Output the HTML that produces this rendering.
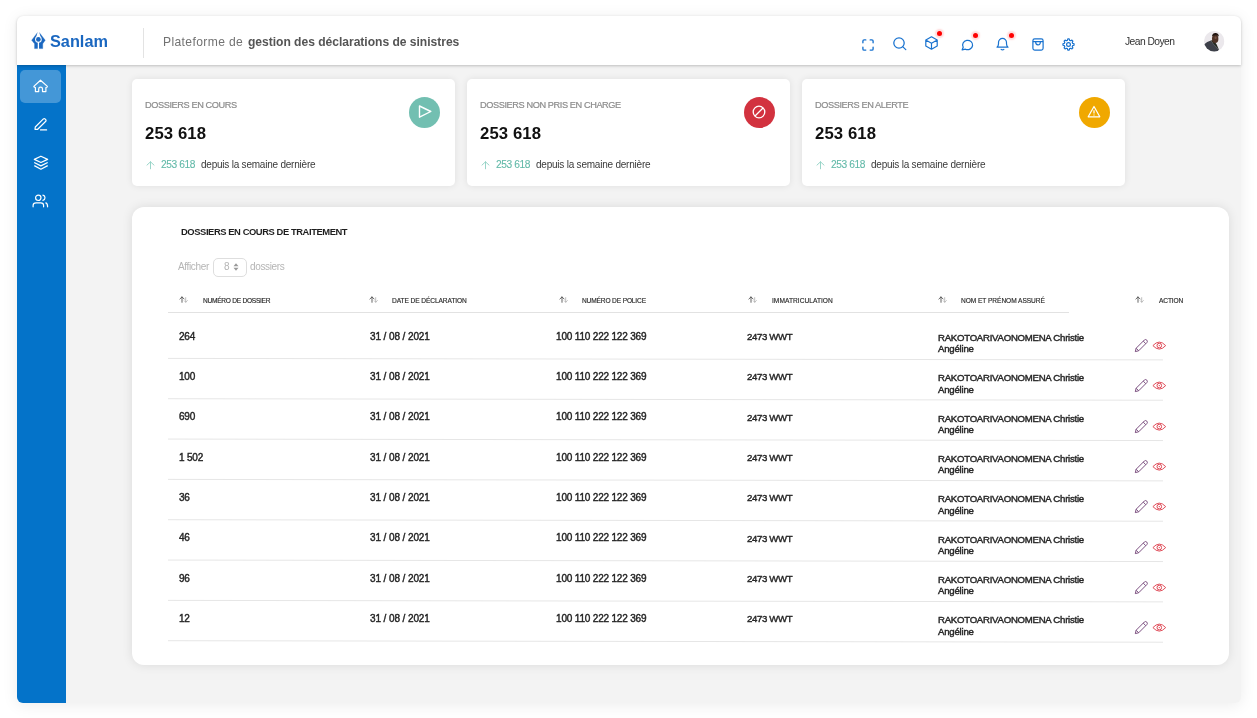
<!DOCTYPE html>
<html><head><meta charset="utf-8">
<style>
*{box-sizing:border-box;margin:0;padding:0}
html,body{width:1257px;height:718px;overflow:hidden;background:#fff;font-family:"Liberation Sans",sans-serif;color:#222}
.t{will-change:transform}
.t{position:absolute;white-space:nowrap}
.abs{position:absolute}
.app{position:absolute;left:17px;top:16px;width:1224px;height:686.5px;background:#f3f3f3;border-radius:6px;box-shadow:0 2px 16px rgba(0,0,0,0.08)}
.hdr{position:absolute;left:17px;top:16px;width:1224px;height:49px;background:#fff;border-radius:6px 6px 0 0;box-shadow:0 1px 3px rgba(0,0,0,0.22)}
.side{position:absolute;left:17px;top:65px;width:49px;height:637.5px;background:#0473c9;border-radius:0 0 0 6px}
.card{position:absolute;background:#fff;border-radius:5px;box-shadow:0 0 7px rgba(0,0,0,0.085)}
.tbl{position:absolute;left:132px;top:206.8px;width:1097px;height:458px;background:#fff;border-radius:12px;box-shadow:0 0 11px rgba(0,0,0,0.1)}
.ln{position:absolute;height:1px;background:#ececec}
svg{position:absolute;overflow:visible}
</style></head>
<body>
<div class="app"></div>
<div class="side"></div>
<div class="hdr"></div>

<svg style="left:28px;top:29px" width="22" height="22" viewBox="0 0 22 22">
<path d="M9.4 3.7 L11.4 3.7 L17.2 11.2 L14.7 14.8 L14.7 19.6 L6.6 19.6 L6.6 14.8 L3.7 11.2 Z" fill="#1a67c0" stroke="#1a67c0" stroke-width="0.4" stroke-linejoin="round"/>
<path d="M9.6 3 L11.2 3 L12.6 8 L8.2 8 Z" fill="#fff"/>
<rect x="9.75" y="12" width="1.3" height="8" fill="#fff"/>
<circle cx="10.4" cy="10.4" r="3.3" fill="#fff"/>
<circle cx="10.4" cy="10.4" r="2.35" fill="#1a67c0"/>
</svg>
<div class="t" style="left:49.60px;top:33.00px;font-size:16.3px;line-height:16.3px;color:#1a67c0;font-weight:bold;letter-spacing:0px;">Sanlam</div>
<div class="abs" style="left:143px;top:28px;width:1px;height:30px;background:#e3e3e3"></div>
<div class="t" style="left:163.40px;top:36.36px;font-size:12.1px;line-height:12.1px;color:#727272;font-weight:normal;letter-spacing:0.38px;">Plateforme de</div>
<div class="t" style="left:247.80px;top:36.36px;font-size:12.1px;line-height:12.1px;color:#555;font-weight:bold;letter-spacing:-0.03px;">gestion des déclarations de sinistres</div>
<div class="t" style="left:1125.00px;top:36.68px;font-size:10.3px;line-height:10.3px;color:#333;font-weight:normal;letter-spacing:-0.55px;">Jean Doyen</div>
<svg style="left:862.3px;top:38.5px" width="13" height="13" viewBox="0 0 13 13" fill="none" stroke="#1872cf" stroke-width="1.35" stroke-linecap="round">
<path d="M0.9 3.8 V2.1 Q0.9 0.9 2.1 0.9 H3.8 M8.2 0.9 H9.9 Q11.1 0.9 11.1 2.1 V3.8 M11.1 8.2 V9.9 Q11.1 11.1 9.9 11.1 H8.2 M3.8 11.1 H2.1 Q0.9 11.1 0.9 9.9 V8.2"/></svg>
<svg style="left:893px;top:37px" width="14" height="14" viewBox="0 0 14 14" fill="none" stroke="#1872cf" stroke-width="1.25" stroke-linecap="round">
<circle cx="6" cy="6" r="5.2"/><path d="M9.9 9.9 L12.8 12.6"/></svg>
<svg style="left:925px;top:36px" width="14" height="14" viewBox="0 0 14 14" fill="none" stroke="#1872cf" stroke-width="1.2" stroke-linejoin="round">
<path d="M6.5 0.8 L12.2 4 V10 L6.5 13.2 L0.8 10 V4 Z M0.8 4 L6.5 7.2 L12.2 4 M6.5 7.2 V13.2"/></svg>
<svg style="left:960.5px;top:39px" width="13" height="12" viewBox="0 0 13 12" fill="none" stroke="#1872cf" stroke-width="1.25" stroke-linejoin="round">
<path d="M1.2 10.8 L2.2 8.2 A5 4.7 0 1 1 4.4 10.2 Z"/></svg>
<svg style="left:996.3px;top:37px" width="13" height="14" viewBox="0 0 13 14" fill="none" stroke="#1872cf" stroke-width="1.2" stroke-linejoin="round" stroke-linecap="round">
<path d="M1 10.2 H12 Q10.5 9 10.5 6.8 V5.4 A4 4 0 0 0 2.5 5.4 V6.8 Q2.5 9 1 10.2 Z M5.2 12.4 Q6.5 13.2 7.8 12.4"/></svg>
<svg style="left:1032px;top:38px" width="12" height="13" viewBox="0 0 12 13" fill="none" stroke="#1872cf" stroke-width="1.2" stroke-linejoin="round">
<rect x="0.9" y="0.9" width="10.2" height="11.2" rx="1.8"/><path d="M0.9 3.6 H11.1 M3.6 3.8 Q3.6 6.8 6 6.8 Q8.4 6.8 8.4 3.8"/></svg>
<svg style="left:1061.8px;top:37.9px" width="13" height="13" viewBox="0 0 13 13" fill="none" stroke="#1872cf" stroke-width="1.2" stroke-linejoin="round">
<path d="M12.06 5.80 L12.06 7.20 L10.65 7.63 L10.24 8.63 L10.92 9.93 L9.93 10.92 L8.63 10.24 L7.63 10.65 L7.20 12.06 L5.80 12.06 L5.37 10.65 L4.37 10.24 L3.07 10.92 L2.08 9.93 L2.76 8.63 L2.35 7.63 L0.94 7.20 L0.94 5.80 L2.35 5.37 L2.76 4.37 L2.08 3.07 L3.07 2.08 L4.37 2.76 L5.37 2.35 L5.80 0.94 L7.20 0.94 L7.63 2.35 L8.63 2.76 L9.93 2.08 L10.92 3.07 L10.24 4.37 L10.65 5.37 Z"/><circle cx="6.5" cy="6.5" r="1.9"/></svg>
<div class="abs" style="left:936.8px;top:30.5px;width:5px;height:5px;border-radius:50%;background:#ff0000;box-shadow:0 0 1.5px 2px rgba(255,70,70,0.2)"></div>
<div class="abs" style="left:972.8px;top:32.5px;width:5px;height:5px;border-radius:50%;background:#ff0000;box-shadow:0 0 1.5px 2px rgba(255,70,70,0.2)"></div>
<div class="abs" style="left:1008.7px;top:32.5px;width:5px;height:5px;border-radius:50%;background:#ff0000;box-shadow:0 0 1.5px 2px rgba(255,70,70,0.2)"></div>
<svg style="left:1203.6px;top:30.5px" width="20.4" height="20.4" viewBox="0 0 20.4 20.4">
<defs><clipPath id="av"><circle cx="10.2" cy="10.2" r="10.2"/></clipPath></defs>
<g clip-path="url(#av)">
<rect width="20.4" height="20.4" fill="#ebe8ec"/>
<path d="M0 13.6 Q3 10.6 6.9 9.6 L9.2 12.8 L15 18.8 L13.2 21 L0 21 Z" fill="#3d4049"/>
<path d="M6.9 9.6 L9.7 9 L12.8 13.8 L15 18.8 L9.2 12.8 Z" fill="#20261f"/>
<ellipse cx="11.2" cy="7.8" rx="3.2" ry="4.3" fill="#4e3226"/>
<path d="M8 5.2 Q8.6 1.8 11.5 1.9 Q14.8 2 14.8 5.4 Q12.6 3.8 10.1 4.4 Z" fill="#21150f"/>
<ellipse cx="11.6" cy="6.8" rx="1.1" ry="1.3" fill="#a27a6a" opacity="0.45"/>
</g></svg>
<div class="abs" style="left:20px;top:69.7px;width:41px;height:33px;border-radius:5px;background:rgba(255,255,255,0.26)"></div>
<svg style="left:33px;top:79px" width="16" height="14" viewBox="0 0 16 14" fill="none" stroke="#fff" stroke-width="1.2" stroke-linejoin="round">
<path d="M7.5 1.2 L14.1 7.1 Q14.7 7.8 13.9 8.2 L12.9 8.5 V12.6 H9.5 V9.9 Q9.5 8.1 7.6 8.1 Q5.7 8.1 5.7 9.9 V12.6 H2.4 V8.5 L1.3 8.2 Q0.5 7.8 1.1 7.1 Z"/></svg>
<svg style="left:33.8px;top:117.6px" width="13" height="13" viewBox="0 0 13 13" fill="none" stroke="#fff" stroke-width="1.2" stroke-linejoin="round" stroke-linecap="round">
<path d="M1 11.3 L1.3 9 L9.4 0.9 Q10.2 0.3 11 0.9 L11.8 1.7 Q12.4 2.5 11.8 3.3 L3.7 11.3 Z M6.5 11.9 H12.6"/></svg>
<svg style="left:33px;top:155px" width="16" height="16" viewBox="0 0 16 16" fill="none" stroke="#fff" stroke-width="1.2" stroke-linejoin="round">
<path d="M7.9 1.2 L14.6 4.4 L7.9 7.5 L1.3 4.4 Z M1.2 7.5 L7.9 10.9 L14.7 7.5 M1.3 10.6 L7.9 14.2 L14.7 10.6"/></svg>
<svg style="left:32px;top:194px" width="17" height="14" viewBox="0 0 17 14" fill="none" stroke="#fff" stroke-width="1.2" stroke-linecap="round">
<circle cx="6.3" cy="3.8" r="2.7"/><path d="M1.1 12.8 V11.6 Q1.1 8.9 4 8.9 H8.7 Q11.6 8.9 11.6 11.6 V12.8 M10.9 1.2 Q13 1.6 13 3.8 Q13 6 10.9 6.4 M13.8 8.9 Q15.6 9.6 15.6 12.8"/></svg>
<div class="card" style="left:132px;top:79px;width:323px;height:107.2px"></div>
<div class="t" style="left:145.20px;top:101.11px;font-size:9.2px;line-height:9.2px;color:#8c8c8c;font-weight:normal;letter-spacing:-0.4px;-webkit-text-stroke:0.2px #8c8c8c">DOSSIERS EN COURS</div>
<div class="t" style="left:145.30px;top:125.76px;font-size:16.7px;line-height:16.7px;color:#111;font-weight:bold;letter-spacing:0.12px;">253 618</div>
<svg style="left:145.5px;top:161.3px" width="9" height="9" viewBox="0 0 9 9" fill="none" stroke="#8fd0c3" stroke-width="0.9" stroke-linecap="round">
<path d="M4.5 7.8 V0.8 M1 4.1 L4.5 0.8 L8 4.1"/></svg>
<div class="t" style="left:160.60px;top:159.77px;font-size:10.2px;line-height:10.2px;color:#62b9a8;font-weight:normal;letter-spacing:-0.42px;-webkit-text-stroke:0.1px #62b9a8">253 618</div>
<div class="t" style="left:201.20px;top:159.94px;font-size:10px;line-height:10px;color:#3a3a3a;font-weight:normal;letter-spacing:-0.22px;">depuis la semaine dernière</div>
<div class="abs" style="left:408.8px;top:96.9px;width:31px;height:31px;border-radius:50%;background:#72bfb1"></div>
<svg style="left:418.3px;top:105.4px" width="14" height="14" viewBox="0 0 14 14" fill="none" stroke="#fff" stroke-width="1.4" stroke-linejoin="round"><path d="M1.5 1 L12.8 6.5 L1.5 12.2 Z"/></svg>
<div class="card" style="left:467px;top:79px;width:323px;height:107.2px"></div>
<div class="t" style="left:480.20px;top:101.11px;font-size:9.2px;line-height:9.2px;color:#8c8c8c;font-weight:normal;letter-spacing:-0.4px;-webkit-text-stroke:0.2px #8c8c8c">DOSSIERS NON PRIS EN CHARGE</div>
<div class="t" style="left:480.30px;top:125.76px;font-size:16.7px;line-height:16.7px;color:#111;font-weight:bold;letter-spacing:0.12px;">253 618</div>
<svg style="left:480.5px;top:161.3px" width="9" height="9" viewBox="0 0 9 9" fill="none" stroke="#8fd0c3" stroke-width="0.9" stroke-linecap="round">
<path d="M4.5 7.8 V0.8 M1 4.1 L4.5 0.8 L8 4.1"/></svg>
<div class="t" style="left:495.60px;top:159.77px;font-size:10.2px;line-height:10.2px;color:#62b9a8;font-weight:normal;letter-spacing:-0.42px;-webkit-text-stroke:0.1px #62b9a8">253 618</div>
<div class="t" style="left:536.20px;top:159.94px;font-size:10px;line-height:10px;color:#3a3a3a;font-weight:normal;letter-spacing:-0.22px;">depuis la semaine dernière</div>
<div class="abs" style="left:743.8px;top:96.9px;width:31px;height:31px;border-radius:50%;background:#d2323f"></div>
<svg style="left:752.3px;top:105.4px" width="14" height="14" viewBox="0 0 14 14" fill="none" stroke="#fff" stroke-width="1.3"><circle cx="7" cy="7" r="5.8"/><path d="M3 11 L11 3"/></svg>
<div class="card" style="left:802px;top:79px;width:323px;height:107.2px"></div>
<div class="t" style="left:815.20px;top:101.11px;font-size:9.2px;line-height:9.2px;color:#8c8c8c;font-weight:normal;letter-spacing:-0.4px;-webkit-text-stroke:0.2px #8c8c8c">DOSSIERS EN ALERTE</div>
<div class="t" style="left:815.30px;top:125.76px;font-size:16.7px;line-height:16.7px;color:#111;font-weight:bold;letter-spacing:0.12px;">253 618</div>
<svg style="left:815.5px;top:161.3px" width="9" height="9" viewBox="0 0 9 9" fill="none" stroke="#8fd0c3" stroke-width="0.9" stroke-linecap="round">
<path d="M4.5 7.8 V0.8 M1 4.1 L4.5 0.8 L8 4.1"/></svg>
<div class="t" style="left:830.60px;top:159.77px;font-size:10.2px;line-height:10.2px;color:#62b9a8;font-weight:normal;letter-spacing:-0.42px;-webkit-text-stroke:0.1px #62b9a8">253 618</div>
<div class="t" style="left:871.20px;top:159.94px;font-size:10px;line-height:10px;color:#3a3a3a;font-weight:normal;letter-spacing:-0.22px;">depuis la semaine dernière</div>
<div class="abs" style="left:1078.8px;top:96.9px;width:31px;height:31px;border-radius:50%;background:#f0a800"></div>
<svg style="left:1087.3px;top:105.4px" width="14" height="14" viewBox="0 0 14 14" fill="none" stroke="#fff" stroke-width="1.2" stroke-linejoin="round"><path d="M7 1.5 L12.8 11.8 H1.2 Z M7 5.2 V8.4 M7 9.6 V10.4"/></svg>
<div class="tbl"></div>
<div class="t" style="left:180.60px;top:227.34px;font-size:9.4px;line-height:9.4px;color:#1e1e1e;font-weight:bold;letter-spacing:-0.42px;">DOSSIERS EN COURS DE TRAITEMENT</div>
<div class="t" style="left:178.00px;top:261.84px;font-size:10px;line-height:10px;color:#b5b5b5;font-weight:normal;letter-spacing:-0.35px;">Afficher</div>
<div class="abs" style="left:213px;top:258px;width:34px;height:19px;border:1px solid #dedede;border-radius:5px"></div>
<div class="t" style="left:223.50px;top:261.84px;font-size:10px;line-height:10px;color:#b5b5b5;font-weight:normal;letter-spacing:0px;">8</div>
<svg style="left:233px;top:263px" width="6" height="8" viewBox="0 0 6 8" fill="#9a9a9a"><path d="M3 0.3 L5.5 3.3 H0.5 Z M3 7.7 L0.5 4.7 H5.5 Z"/></svg>
<div class="t" style="left:250.00px;top:261.84px;font-size:10px;line-height:10px;color:#b5b5b5;font-weight:normal;letter-spacing:-0.35px;">dossiers</div>
<svg style="left:179.1px;top:295.5px" width="10" height="7" viewBox="0 0 10 7" fill="none" stroke-width="1.1" stroke-linecap="round">
<path d="M3 6.3 V0.9 M0.9 3 L3 0.9 L5.1 3" stroke="#4a4a4a" stroke-width="0.85"/><path d="M6.7 1.6 V6.2 M5.3 4.8 L6.7 6.2 L8.4 4.6" stroke="#a8a8a8" stroke-width="0.75"/></svg>
<div class="t" style="left:203.00px;top:297.51px;font-size:6.6px;line-height:6.6px;color:#2a2a2a;font-weight:normal;letter-spacing:-0.27px;-webkit-text-stroke:0.15px #2a2a2a">NUMÉRO DE DOSSIER</div>
<svg style="left:369.0px;top:295.5px" width="10" height="7" viewBox="0 0 10 7" fill="none" stroke-width="1.1" stroke-linecap="round">
<path d="M3 6.3 V0.9 M0.9 3 L3 0.9 L5.1 3" stroke="#4a4a4a" stroke-width="0.85"/><path d="M6.7 1.6 V6.2 M5.3 4.8 L6.7 6.2 L8.4 4.6" stroke="#a8a8a8" stroke-width="0.75"/></svg>
<div class="t" style="left:392.20px;top:297.51px;font-size:6.6px;line-height:6.6px;color:#2a2a2a;font-weight:normal;letter-spacing:-0.08px;-webkit-text-stroke:0.15px #2a2a2a">DATE DE DÉCLARATION</div>
<svg style="left:558.6px;top:295.5px" width="10" height="7" viewBox="0 0 10 7" fill="none" stroke-width="1.1" stroke-linecap="round">
<path d="M3 6.3 V0.9 M0.9 3 L3 0.9 L5.1 3" stroke="#4a4a4a" stroke-width="0.85"/><path d="M6.7 1.6 V6.2 M5.3 4.8 L6.7 6.2 L8.4 4.6" stroke="#a8a8a8" stroke-width="0.75"/></svg>
<div class="t" style="left:582.00px;top:297.51px;font-size:6.6px;line-height:6.6px;color:#2a2a2a;font-weight:normal;letter-spacing:-0.15px;-webkit-text-stroke:0.15px #2a2a2a">NUMÉRO DE POLICE</div>
<svg style="left:748.4px;top:295.5px" width="10" height="7" viewBox="0 0 10 7" fill="none" stroke-width="1.1" stroke-linecap="round">
<path d="M3 6.3 V0.9 M0.9 3 L3 0.9 L5.1 3" stroke="#4a4a4a" stroke-width="0.85"/><path d="M6.7 1.6 V6.2 M5.3 4.8 L6.7 6.2 L8.4 4.6" stroke="#a8a8a8" stroke-width="0.75"/></svg>
<div class="t" style="left:771.50px;top:297.51px;font-size:6.6px;line-height:6.6px;color:#2a2a2a;font-weight:normal;letter-spacing:0.04px;-webkit-text-stroke:0.15px #2a2a2a">IMMATRICULATION</div>
<svg style="left:937.6px;top:295.5px" width="10" height="7" viewBox="0 0 10 7" fill="none" stroke-width="1.1" stroke-linecap="round">
<path d="M3 6.3 V0.9 M0.9 3 L3 0.9 L5.1 3" stroke="#4a4a4a" stroke-width="0.85"/><path d="M6.7 1.6 V6.2 M5.3 4.8 L6.7 6.2 L8.4 4.6" stroke="#a8a8a8" stroke-width="0.75"/></svg>
<div class="t" style="left:961.00px;top:297.51px;font-size:6.6px;line-height:6.6px;color:#2a2a2a;font-weight:normal;letter-spacing:-0.05px;-webkit-text-stroke:0.15px #2a2a2a">NOM ET PRÉNOM ASSURÉ</div>
<svg style="left:1135.3px;top:295.5px" width="10" height="7" viewBox="0 0 10 7" fill="none" stroke-width="1.1" stroke-linecap="round">
<path d="M3 6.3 V0.9 M0.9 3 L3 0.9 L5.1 3" stroke="#4a4a4a" stroke-width="0.85"/><path d="M6.7 1.6 V6.2 M5.3 4.8 L6.7 6.2 L8.4 4.6" stroke="#a8a8a8" stroke-width="0.75"/></svg>
<div class="t" style="left:1158.60px;top:297.51px;font-size:6.6px;line-height:6.6px;color:#2a2a2a;font-weight:normal;letter-spacing:-0.12px;-webkit-text-stroke:0.15px #2a2a2a">ACTION</div>
<div class="ln" style="left:168px;top:312px;width:901px;background:#e2e2e2"></div>
<div class="t" style="left:179.30px;top:331.74px;font-size:10px;line-height:10px;color:#262626;font-weight:normal;letter-spacing:-0.2px;-webkit-text-stroke:0.42px #262626">264</div>
<div class="t" style="left:370.00px;top:331.74px;font-size:10px;line-height:10px;color:#262626;font-weight:normal;letter-spacing:-0.1px;-webkit-text-stroke:0.42px #262626">31 / 08 / 2021</div>
<div class="t" style="left:556.20px;top:331.74px;font-size:10px;line-height:10px;color:#262626;font-weight:normal;letter-spacing:-0.18px;-webkit-text-stroke:0.42px #262626">100 110 222 122 369</div>
<div class="t" style="left:746.70px;top:332.07px;font-size:9.6px;line-height:9.6px;color:#262626;font-weight:normal;letter-spacing:-0.35px;-webkit-text-stroke:0.42px #262626">2473 WWT</div>
<div class="t" style="left:938.40px;top:332.97px;font-size:9.6px;line-height:9.6px;color:#262626;font-weight:normal;letter-spacing:-0.25px;-webkit-text-stroke:0.42px #262626">RAKOTOARIVAONOMENA Christie</div>
<div class="t" style="left:938.40px;top:344.37px;font-size:9.6px;line-height:9.6px;color:#262626;font-weight:normal;letter-spacing:-0.2px;-webkit-text-stroke:0.42px #262626">Angéline</div>
<svg style="left:0;top:0" width="1257" height="718"><path d="M168 358.40 L1163 359.90" stroke="#e6e6e6" stroke-width="1"/></svg>
<svg style="left:1130px;top:334.00px" width="40" height="22" viewBox="0 0 40 22" fill="none" stroke-linejoin="round">
<path d="M5.3 17.6 L6.13 14.23 L14.33 6.03 A1.8 1.8 0 0 1 16.87 8.57 L8.67 16.77 Z M6.13 14.23 L8.67 16.77 M13.23 7.13 L15.77 9.67" stroke="#76487a" stroke-width="0.95"/>
<path d="M22.9 11.6 Q29.3 4.6 35.7 11.6 Q29.3 18.6 22.9 11.6 Z" stroke="#de4451" stroke-width="0.95"/>
<circle cx="29.3" cy="11.6" r="2.3" stroke="#de4451" stroke-width="1"/><circle cx="29.3" cy="11.6" r="0.7" fill="#de4451"/></svg>
<div class="t" style="left:179.30px;top:372.06px;font-size:10px;line-height:10px;color:#262626;font-weight:normal;letter-spacing:-0.2px;-webkit-text-stroke:0.42px #262626">100</div>
<div class="t" style="left:370.00px;top:372.06px;font-size:10px;line-height:10px;color:#262626;font-weight:normal;letter-spacing:-0.1px;-webkit-text-stroke:0.42px #262626">31 / 08 / 2021</div>
<div class="t" style="left:556.20px;top:372.06px;font-size:10px;line-height:10px;color:#262626;font-weight:normal;letter-spacing:-0.18px;-webkit-text-stroke:0.42px #262626">100 110 222 122 369</div>
<div class="t" style="left:746.70px;top:372.40px;font-size:9.6px;line-height:9.6px;color:#262626;font-weight:normal;letter-spacing:-0.35px;-webkit-text-stroke:0.42px #262626">2473 WWT</div>
<div class="t" style="left:938.40px;top:373.30px;font-size:9.6px;line-height:9.6px;color:#262626;font-weight:normal;letter-spacing:-0.25px;-webkit-text-stroke:0.42px #262626">RAKOTOARIVAONOMENA Christie</div>
<div class="t" style="left:938.40px;top:384.70px;font-size:9.6px;line-height:9.6px;color:#262626;font-weight:normal;letter-spacing:-0.2px;-webkit-text-stroke:0.42px #262626">Angéline</div>
<svg style="left:0;top:0" width="1257" height="718"><path d="M168 398.73 L1163 400.23" stroke="#e6e6e6" stroke-width="1"/></svg>
<svg style="left:1130px;top:374.33px" width="40" height="22" viewBox="0 0 40 22" fill="none" stroke-linejoin="round">
<path d="M5.3 17.6 L6.13 14.23 L14.33 6.03 A1.8 1.8 0 0 1 16.87 8.57 L8.67 16.77 Z M6.13 14.23 L8.67 16.77 M13.23 7.13 L15.77 9.67" stroke="#76487a" stroke-width="0.95"/>
<path d="M22.9 11.6 Q29.3 4.6 35.7 11.6 Q29.3 18.6 22.9 11.6 Z" stroke="#de4451" stroke-width="0.95"/>
<circle cx="29.3" cy="11.6" r="2.3" stroke="#de4451" stroke-width="1"/><circle cx="29.3" cy="11.6" r="0.7" fill="#de4451"/></svg>
<div class="t" style="left:179.30px;top:412.40px;font-size:10px;line-height:10px;color:#262626;font-weight:normal;letter-spacing:-0.2px;-webkit-text-stroke:0.42px #262626">690</div>
<div class="t" style="left:370.00px;top:412.40px;font-size:10px;line-height:10px;color:#262626;font-weight:normal;letter-spacing:-0.1px;-webkit-text-stroke:0.42px #262626">31 / 08 / 2021</div>
<div class="t" style="left:556.20px;top:412.40px;font-size:10px;line-height:10px;color:#262626;font-weight:normal;letter-spacing:-0.18px;-webkit-text-stroke:0.42px #262626">100 110 222 122 369</div>
<div class="t" style="left:746.70px;top:412.73px;font-size:9.6px;line-height:9.6px;color:#262626;font-weight:normal;letter-spacing:-0.35px;-webkit-text-stroke:0.42px #262626">2473 WWT</div>
<div class="t" style="left:938.40px;top:413.63px;font-size:9.6px;line-height:9.6px;color:#262626;font-weight:normal;letter-spacing:-0.25px;-webkit-text-stroke:0.42px #262626">RAKOTOARIVAONOMENA Christie</div>
<div class="t" style="left:938.40px;top:425.03px;font-size:9.6px;line-height:9.6px;color:#262626;font-weight:normal;letter-spacing:-0.2px;-webkit-text-stroke:0.42px #262626">Angéline</div>
<svg style="left:0;top:0" width="1257" height="718"><path d="M168 439.06 L1163 440.56" stroke="#e6e6e6" stroke-width="1"/></svg>
<svg style="left:1130px;top:414.66px" width="40" height="22" viewBox="0 0 40 22" fill="none" stroke-linejoin="round">
<path d="M5.3 17.6 L6.13 14.23 L14.33 6.03 A1.8 1.8 0 0 1 16.87 8.57 L8.67 16.77 Z M6.13 14.23 L8.67 16.77 M13.23 7.13 L15.77 9.67" stroke="#76487a" stroke-width="0.95"/>
<path d="M22.9 11.6 Q29.3 4.6 35.7 11.6 Q29.3 18.6 22.9 11.6 Z" stroke="#de4451" stroke-width="0.95"/>
<circle cx="29.3" cy="11.6" r="2.3" stroke="#de4451" stroke-width="1"/><circle cx="29.3" cy="11.6" r="0.7" fill="#de4451"/></svg>
<div class="t" style="left:179.30px;top:452.73px;font-size:10px;line-height:10px;color:#262626;font-weight:normal;letter-spacing:-0.2px;-webkit-text-stroke:0.42px #262626">1 502</div>
<div class="t" style="left:370.00px;top:452.73px;font-size:10px;line-height:10px;color:#262626;font-weight:normal;letter-spacing:-0.1px;-webkit-text-stroke:0.42px #262626">31 / 08 / 2021</div>
<div class="t" style="left:556.20px;top:452.73px;font-size:10px;line-height:10px;color:#262626;font-weight:normal;letter-spacing:-0.18px;-webkit-text-stroke:0.42px #262626">100 110 222 122 369</div>
<div class="t" style="left:746.70px;top:453.06px;font-size:9.6px;line-height:9.6px;color:#262626;font-weight:normal;letter-spacing:-0.35px;-webkit-text-stroke:0.42px #262626">2473 WWT</div>
<div class="t" style="left:938.40px;top:453.96px;font-size:9.6px;line-height:9.6px;color:#262626;font-weight:normal;letter-spacing:-0.25px;-webkit-text-stroke:0.42px #262626">RAKOTOARIVAONOMENA Christie</div>
<div class="t" style="left:938.40px;top:465.36px;font-size:9.6px;line-height:9.6px;color:#262626;font-weight:normal;letter-spacing:-0.2px;-webkit-text-stroke:0.42px #262626">Angéline</div>
<svg style="left:0;top:0" width="1257" height="718"><path d="M168 479.39 L1163 480.89" stroke="#e6e6e6" stroke-width="1"/></svg>
<svg style="left:1130px;top:454.99px" width="40" height="22" viewBox="0 0 40 22" fill="none" stroke-linejoin="round">
<path d="M5.3 17.6 L6.13 14.23 L14.33 6.03 A1.8 1.8 0 0 1 16.87 8.57 L8.67 16.77 Z M6.13 14.23 L8.67 16.77 M13.23 7.13 L15.77 9.67" stroke="#76487a" stroke-width="0.95"/>
<path d="M22.9 11.6 Q29.3 4.6 35.7 11.6 Q29.3 18.6 22.9 11.6 Z" stroke="#de4451" stroke-width="0.95"/>
<circle cx="29.3" cy="11.6" r="2.3" stroke="#de4451" stroke-width="1"/><circle cx="29.3" cy="11.6" r="0.7" fill="#de4451"/></svg>
<div class="t" style="left:179.30px;top:493.06px;font-size:10px;line-height:10px;color:#262626;font-weight:normal;letter-spacing:-0.2px;-webkit-text-stroke:0.42px #262626">36</div>
<div class="t" style="left:370.00px;top:493.06px;font-size:10px;line-height:10px;color:#262626;font-weight:normal;letter-spacing:-0.1px;-webkit-text-stroke:0.42px #262626">31 / 08 / 2021</div>
<div class="t" style="left:556.20px;top:493.06px;font-size:10px;line-height:10px;color:#262626;font-weight:normal;letter-spacing:-0.18px;-webkit-text-stroke:0.42px #262626">100 110 222 122 369</div>
<div class="t" style="left:746.70px;top:493.39px;font-size:9.6px;line-height:9.6px;color:#262626;font-weight:normal;letter-spacing:-0.35px;-webkit-text-stroke:0.42px #262626">2473 WWT</div>
<div class="t" style="left:938.40px;top:494.29px;font-size:9.6px;line-height:9.6px;color:#262626;font-weight:normal;letter-spacing:-0.25px;-webkit-text-stroke:0.42px #262626">RAKOTOARIVAONOMENA Christie</div>
<div class="t" style="left:938.40px;top:505.69px;font-size:9.6px;line-height:9.6px;color:#262626;font-weight:normal;letter-spacing:-0.2px;-webkit-text-stroke:0.42px #262626">Angéline</div>
<svg style="left:0;top:0" width="1257" height="718"><path d="M168 519.72 L1163 521.22" stroke="#e6e6e6" stroke-width="1"/></svg>
<svg style="left:1130px;top:495.32px" width="40" height="22" viewBox="0 0 40 22" fill="none" stroke-linejoin="round">
<path d="M5.3 17.6 L6.13 14.23 L14.33 6.03 A1.8 1.8 0 0 1 16.87 8.57 L8.67 16.77 Z M6.13 14.23 L8.67 16.77 M13.23 7.13 L15.77 9.67" stroke="#76487a" stroke-width="0.95"/>
<path d="M22.9 11.6 Q29.3 4.6 35.7 11.6 Q29.3 18.6 22.9 11.6 Z" stroke="#de4451" stroke-width="0.95"/>
<circle cx="29.3" cy="11.6" r="2.3" stroke="#de4451" stroke-width="1"/><circle cx="29.3" cy="11.6" r="0.7" fill="#de4451"/></svg>
<div class="t" style="left:179.30px;top:533.38px;font-size:10px;line-height:10px;color:#262626;font-weight:normal;letter-spacing:-0.2px;-webkit-text-stroke:0.42px #262626">46</div>
<div class="t" style="left:370.00px;top:533.38px;font-size:10px;line-height:10px;color:#262626;font-weight:normal;letter-spacing:-0.1px;-webkit-text-stroke:0.42px #262626">31 / 08 / 2021</div>
<div class="t" style="left:556.20px;top:533.38px;font-size:10px;line-height:10px;color:#262626;font-weight:normal;letter-spacing:-0.18px;-webkit-text-stroke:0.42px #262626">100 110 222 122 369</div>
<div class="t" style="left:746.70px;top:533.72px;font-size:9.6px;line-height:9.6px;color:#262626;font-weight:normal;letter-spacing:-0.35px;-webkit-text-stroke:0.42px #262626">2473 WWT</div>
<div class="t" style="left:938.40px;top:534.62px;font-size:9.6px;line-height:9.6px;color:#262626;font-weight:normal;letter-spacing:-0.25px;-webkit-text-stroke:0.42px #262626">RAKOTOARIVAONOMENA Christie</div>
<div class="t" style="left:938.40px;top:546.02px;font-size:9.6px;line-height:9.6px;color:#262626;font-weight:normal;letter-spacing:-0.2px;-webkit-text-stroke:0.42px #262626">Angéline</div>
<svg style="left:0;top:0" width="1257" height="718"><path d="M168 560.05 L1163 561.55" stroke="#e6e6e6" stroke-width="1"/></svg>
<svg style="left:1130px;top:535.65px" width="40" height="22" viewBox="0 0 40 22" fill="none" stroke-linejoin="round">
<path d="M5.3 17.6 L6.13 14.23 L14.33 6.03 A1.8 1.8 0 0 1 16.87 8.57 L8.67 16.77 Z M6.13 14.23 L8.67 16.77 M13.23 7.13 L15.77 9.67" stroke="#76487a" stroke-width="0.95"/>
<path d="M22.9 11.6 Q29.3 4.6 35.7 11.6 Q29.3 18.6 22.9 11.6 Z" stroke="#de4451" stroke-width="0.95"/>
<circle cx="29.3" cy="11.6" r="2.3" stroke="#de4451" stroke-width="1"/><circle cx="29.3" cy="11.6" r="0.7" fill="#de4451"/></svg>
<div class="t" style="left:179.30px;top:573.71px;font-size:10px;line-height:10px;color:#262626;font-weight:normal;letter-spacing:-0.2px;-webkit-text-stroke:0.42px #262626">96</div>
<div class="t" style="left:370.00px;top:573.71px;font-size:10px;line-height:10px;color:#262626;font-weight:normal;letter-spacing:-0.1px;-webkit-text-stroke:0.42px #262626">31 / 08 / 2021</div>
<div class="t" style="left:556.20px;top:573.71px;font-size:10px;line-height:10px;color:#262626;font-weight:normal;letter-spacing:-0.18px;-webkit-text-stroke:0.42px #262626">100 110 222 122 369</div>
<div class="t" style="left:746.70px;top:574.05px;font-size:9.6px;line-height:9.6px;color:#262626;font-weight:normal;letter-spacing:-0.35px;-webkit-text-stroke:0.42px #262626">2473 WWT</div>
<div class="t" style="left:938.40px;top:574.95px;font-size:9.6px;line-height:9.6px;color:#262626;font-weight:normal;letter-spacing:-0.25px;-webkit-text-stroke:0.42px #262626">RAKOTOARIVAONOMENA Christie</div>
<div class="t" style="left:938.40px;top:586.35px;font-size:9.6px;line-height:9.6px;color:#262626;font-weight:normal;letter-spacing:-0.2px;-webkit-text-stroke:0.42px #262626">Angéline</div>
<svg style="left:0;top:0" width="1257" height="718"><path d="M168 600.38 L1163 601.88" stroke="#e6e6e6" stroke-width="1"/></svg>
<svg style="left:1130px;top:575.98px" width="40" height="22" viewBox="0 0 40 22" fill="none" stroke-linejoin="round">
<path d="M5.3 17.6 L6.13 14.23 L14.33 6.03 A1.8 1.8 0 0 1 16.87 8.57 L8.67 16.77 Z M6.13 14.23 L8.67 16.77 M13.23 7.13 L15.77 9.67" stroke="#76487a" stroke-width="0.95"/>
<path d="M22.9 11.6 Q29.3 4.6 35.7 11.6 Q29.3 18.6 22.9 11.6 Z" stroke="#de4451" stroke-width="0.95"/>
<circle cx="29.3" cy="11.6" r="2.3" stroke="#de4451" stroke-width="1"/><circle cx="29.3" cy="11.6" r="0.7" fill="#de4451"/></svg>
<div class="t" style="left:179.30px;top:614.04px;font-size:10px;line-height:10px;color:#262626;font-weight:normal;letter-spacing:-0.2px;-webkit-text-stroke:0.42px #262626">12</div>
<div class="t" style="left:370.00px;top:614.04px;font-size:10px;line-height:10px;color:#262626;font-weight:normal;letter-spacing:-0.1px;-webkit-text-stroke:0.42px #262626">31 / 08 / 2021</div>
<div class="t" style="left:556.20px;top:614.04px;font-size:10px;line-height:10px;color:#262626;font-weight:normal;letter-spacing:-0.18px;-webkit-text-stroke:0.42px #262626">100 110 222 122 369</div>
<div class="t" style="left:746.70px;top:614.38px;font-size:9.6px;line-height:9.6px;color:#262626;font-weight:normal;letter-spacing:-0.35px;-webkit-text-stroke:0.42px #262626">2473 WWT</div>
<div class="t" style="left:938.40px;top:615.28px;font-size:9.6px;line-height:9.6px;color:#262626;font-weight:normal;letter-spacing:-0.25px;-webkit-text-stroke:0.42px #262626">RAKOTOARIVAONOMENA Christie</div>
<div class="t" style="left:938.40px;top:626.68px;font-size:9.6px;line-height:9.6px;color:#262626;font-weight:normal;letter-spacing:-0.2px;-webkit-text-stroke:0.42px #262626">Angéline</div>
<svg style="left:0;top:0" width="1257" height="718"><path d="M168 640.71 L1163 642.21" stroke="#e6e6e6" stroke-width="1"/></svg>
<svg style="left:1130px;top:616.31px" width="40" height="22" viewBox="0 0 40 22" fill="none" stroke-linejoin="round">
<path d="M5.3 17.6 L6.13 14.23 L14.33 6.03 A1.8 1.8 0 0 1 16.87 8.57 L8.67 16.77 Z M6.13 14.23 L8.67 16.77 M13.23 7.13 L15.77 9.67" stroke="#76487a" stroke-width="0.95"/>
<path d="M22.9 11.6 Q29.3 4.6 35.7 11.6 Q29.3 18.6 22.9 11.6 Z" stroke="#de4451" stroke-width="0.95"/>
<circle cx="29.3" cy="11.6" r="2.3" stroke="#de4451" stroke-width="1"/><circle cx="29.3" cy="11.6" r="0.7" fill="#de4451"/></svg>
</body></html>
